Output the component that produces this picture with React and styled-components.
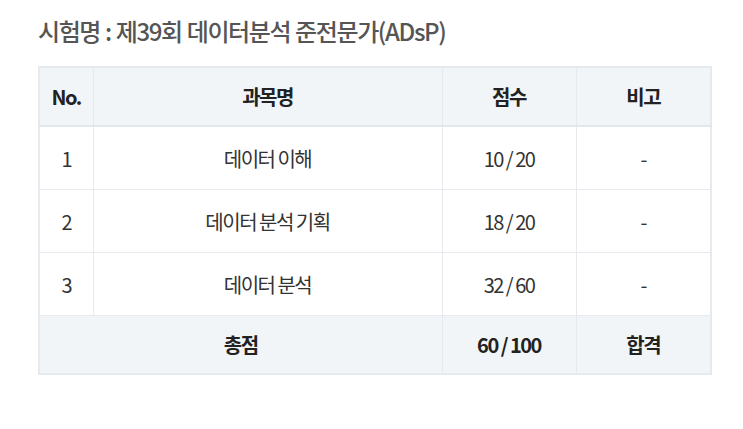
import React from 'react';
import styled, { createGlobalStyle } from 'styled-components';

const GlobalStyle = createGlobalStyle`
    body {
        margin: 0;
        background: #fff;
        font-family: "Noto Sans CJK KR", "Noto Sans", sans-serif;
    }
`;

const Page = styled.div`
    padding: 14px 33px 0 38px;
`;

const Title = styled.h2`
    margin: 0 0 18px;
    font-size: 24px;
    font-weight: 500;
    letter-spacing: -1.4px;
    word-spacing: 1px;
    color: #555;
    line-height: 34px;
`;

const Table = styled.table`
    width: 672px;
    border-collapse: collapse;
    border: 2px solid #e6e9ed;
    table-layout: fixed;
`;

const Th = styled.th`
    height: 57px;
    background: #f2f5f7;
    border: 1px solid #e6e9ed;
    border-bottom: 2px solid #e3e7ec;
    font-size: 20px;
    font-weight: 700;
    letter-spacing: -1.5px;
    color: #222;
    padding: 0;
`;

const Td = styled.td`
    height: 62px;
    border: 1px solid #e6e9ed;
    text-align: center;
    font-size: 20px;
    font-weight: 400;
    letter-spacing: -1.5px;
    color: #333;
    padding: 0;
    background: ${p => (p.$total ? '#f2f5f7' : '#fff')};
    ${p => p.$total && 'font-weight: 700; color: #222; height: 57px;'}
`;

const rows = [
    { no: 1, subject: '데이터 이해', score: '10 / 20', note: '-' },
    { no: 2, subject: '데이터 분석 기획', score: '18 / 20', note: '-' },
    { no: 3, subject: '데이터 분석', score: '32 / 60', note: '-' },
];

export default function App() {
    return (
        <Page>
            <GlobalStyle />
            <Title>시험명 : 제39회 데이터분석 준전문가(ADsP)</Title>
            <Table>
                <colgroup>
                    <col style={{ width: 54 }} />
                    <col style={{ width: 349 }} />
                    <col style={{ width: 134 }} />
                    <col style={{ width: 135 }} />
                </colgroup>
                <thead>
                    <tr>
                        <Th>No.</Th>
                        <Th>과목명</Th>
                        <Th>점수</Th>
                        <Th>비고</Th>
                    </tr>
                </thead>
                <tbody>
                    {rows.map(r => (
                        <tr key={r.no}>
                            <Td>{r.no}</Td>
                            <Td>{r.subject}</Td>
                            <Td>{r.score}</Td>
                            <Td>{r.note}</Td>
                        </tr>
                    ))}
                    <tr>
                        <Td $total colSpan={2}>총점</Td>
                        <Td $total>60 / 100</Td>
                        <Td $total>합격</Td>
                    </tr>
                </tbody>
            </Table>
        </Page>
    );
}
